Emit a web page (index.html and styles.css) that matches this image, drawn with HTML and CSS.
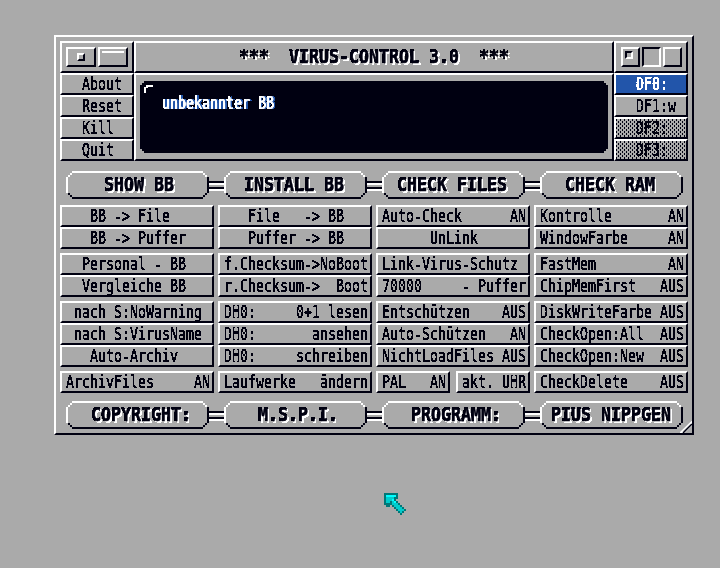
FILE: index.html
```html
<!DOCTYPE html>
<html lang="de">
<head>
<meta charset="utf-8">
<title>VIRUS-CONTROL 3.0</title>
<link rel="stylesheet" href="styles.css">
</head>
<body>
<svg class="defs" width="0" height="0">
  <filter id="crisp" x="-5%" y="-20%" width="110%" height="140%" color-interpolation-filters="sRGB"><feComponentTransfer><feFuncA type="discrete" tableValues="0 0 1 1 1"/></feComponentTransfer></filter>
  <symbol id="pill" viewBox="0 0 143 28" shape-rendering="crispEdges">
    <path fill="#fff" d="M6 0h131v2H6zM4 2h2v2H4zM2 4h2v2H2zM0 6h2v16H0zM137 2h2v2h-2zM139 4h2v2h-2z"/>
    <path fill="#000011" d="M6 26h131v2H6zM2 22h2v2H2zM4 24h2v2H4zM141 6h2v16h-2zM139 22h2v2h-2zM137 24h2v2h-2z"/>
  </symbol>
</svg>
<main class="window">
  <section class="top">
    <div class="cell gadgets">
      <i class="box wide"><b class="dot"></b></i><i class="box wide"><b class="bar"></b></i>
    </div>
    <div class="cell title"><span class="big">***  VIRUS-CONTROL 3.0  ***</span></div>
    <div class="cell gadgets right">
      <i class="box"><b class="dot in"></b></i><i class="box pressed"></i><i class="box"></i>
    </div>
    <div class="stack left">
      <div class="btn"><span>About</span></div>
      <div class="btn"><span>Reset</span></div>
      <div class="btn"><span>Kill</span></div>
      <div class="btn"><span>Quit</span></div>
    </div>
    <div class="cell screen">
      <div class="display">
        <svg class="mark" width="9" height="8" shape-rendering="crispEdges"><path fill="#fff" d="M2 0h7v2H4v1H2v5H0V2h2z"/></svg>
        <span class="msg">unbekannter BB</span>
      </div>
    </div>
    <div class="stack drives">
      <div class="btn on"><span>DF0:</span></div>
      <div class="btn"><span>DF1:w</span></div>
      <div class="btn off"><span>DF2:</span></div>
      <div class="btn off"><span>DF3:</span></div>
    </div>
  </section>

  <section class="pills">
    <div class="pill"><svg><use href="#pill"/></svg><span class="big p38">SHOW BB</span></div><i class="link"></i>
    <div class="pill"><svg><use href="#pill"/></svg><span class="big p20">INSTALL BB</span></div><i class="link"></i>
    <div class="pill"><svg><use href="#pill"/></svg><span class="big p15">CHECK FILES</span></div><i class="link"></i>
    <div class="pill"><svg><use href="#pill"/></svg><span class="big p25">CHECK RAM</span></div>
  </section>

  <section class="grid">
    <div class="col">
      <div class="btn"><span>   BB -&gt; File</span></div>
      <div class="btn end"><span>   BB -&gt; Puffer</span></div>
      <div class="btn"><span>  Personal - BB</span></div>
      <div class="btn end"><span>  Vergleiche BB</span></div>
      <div class="btn"><span> nach S:NoWarning</span></div>
      <div class="btn"><span> nach S:VirusName</span></div>
      <div class="btn end"><span>   Auto-Archiv</span></div>
      <div class="btn"><span>ArchivFiles     AN</span></div>
    </div>
    <div class="col">
      <div class="btn"><span>   File   -&gt; BB</span></div>
      <div class="btn end"><span>   Puffer -&gt; BB</span></div>
      <div class="btn"><span>f.Checksum-&gt;NoBoot</span></div>
      <div class="btn end"><span>r.Checksum-&gt;  Boot</span></div>
      <div class="btn"><span>DH0:     0+1 lesen</span></div>
      <div class="btn"><span>DH0:       ansehen</span></div>
      <div class="btn end"><span>DH0:     schreiben</span></div>
      <div class="btn"><span>Laufwerke   ändern</span></div>
    </div>
    <div class="col">
      <div class="btn"><span>Auto-Check      AN</span></div>
      <div class="btn end"><span>      UnLink</span></div>
      <div class="btn"><span>Link-Virus-Schutz</span></div>
      <div class="btn end"><span>70000     - Puffer</span></div>
      <div class="btn"><span>Entschützen    AUS</span></div>
      <div class="btn"><span>Auto-Schützen   AN</span></div>
      <div class="btn end"><span>NichtLoadFiles AUS</span></div>
      <div class="pair">
        <div class="btn"><span>PAL   AN</span></div>
        <div class="btn"><span>akt. UHR</span></div>
      </div>
    </div>
    <div class="col">
      <div class="btn"><span>Kontrolle       AN</span></div>
      <div class="btn end"><span>WindowFarbe     AN</span></div>
      <div class="btn"><span>FastMem         AN</span></div>
      <div class="btn end"><span>ChipMemFirst   AUS</span></div>
      <div class="btn"><span>DiskWriteFarbe AUS</span></div>
      <div class="btn"><span>CheckOpen:All  AUS</span></div>
      <div class="btn end"><span>CheckOpen:New  AUS</span></div>
      <div class="btn"><span>CheckDelete    AUS</span></div>
    </div>
  </section>

  <section class="pills foot">
    <div class="pill"><svg><use href="#pill"/></svg><span class="big p25">COPYRIGHT:</span></div><i class="link"></i>
    <div class="pill"><svg><use href="#pill"/></svg><span class="big p34">M.S.P.I.</span></div><i class="link"></i>
    <div class="pill"><svg><use href="#pill"/></svg><span class="big p29">PROGRAMM:</span></div><i class="link"></i>
    <div class="pill"><svg><use href="#pill"/></svg><span class="big p11">PIUS NIPPGEN</span></div>
  </section>
  <svg class="resize" width="12" height="12"><path fill="#aaa" stroke="#fff" stroke-width="1.5" d="M0.5 11.5L11.5 1V4L4 11.5z"/><path stroke="#000011" stroke-width="1.5" d="M3 12L12 3"/></svg>
</main>
<svg class="pointer" width="22" height="22" shape-rendering="crispEdges">
  <path fill="#007777" d="M0 0h14v6h-2v2h2v2h2v2h2v2h2v2h2v2h-2v2h-2v2h-2v-2h-2v-2h-2v-2h-2v-2H8v-2H6v2H2v-2H0z"/>
  <path fill="#00cccc" d="M2 4h8v4h2v2h2v2h2v2h2v2h2v2h-2v2h-2v-2h-2v-2h-2v-2h-2v-2H8V8H6v2H2z"/>
  <path fill="#00ffff" d="M2 2h10v2H2zM8 6h2v2h2v2h-2V8H8z"/>
</svg>
</body>
</html>
```
FILE: styles.css
```css
* { box-sizing: border-box; }
body {
  margin: 0;
  width: 720px;
  height: 568px;
  overflow: hidden;
  background: #aaaaaa;
  color: #000011;
  font-family: "DejaVu Sans Mono", "Liberation Mono", monospace;
}
.defs { position: absolute; }
i, b { display: block; }
.window {
  position: relative;
  width: 640px;
  height: 400px;
  margin: 35px 0 0 54px;
  padding: 4px;
  border: 2px solid;
  border-color: #fff #000011 #000011 #fff;
}
.top {
  display: grid;
  grid-template-columns: 74px 480px 74px;
  grid-template-rows: 32px 88px;
}
.cell, .btn {
  border: 2px solid;
  border-color: #fff #000011 #000011 #fff;
}
.gadgets { display: flex; gap: 2px; padding: 4px; }
.gadgets.right { padding-left: 5px; }
.box {
  width: 19px;
  height: 20px;
  border: 2px solid;
  border-color: #fff #000011 #000011 #fff;
}
.box.wide { width: 30px; }
.box.pressed { border-color: #000011 #fff #fff #000011; }
.dot {
  width: 8px;
  height: 8px;
  margin: 4px 0 0 9px;
  border: 2px solid;
  border-color: #fff #000011 #000011 #fff;
}
.dot.in { margin: 2px; border-color: #000011 #fff #fff #000011; }
.bar { height: 2px; margin: 2px; background: #fff; }
.btn { height: 22px; padding-left: 4px; }
.btn span, .big, .msg {
  display: block;
  width: max-content;
  white-space: pre;
  font-size: 13.29px;
  line-height: 18px;
  transform-origin: 0 14px;
  transform: scaleY(1.38);
  font-variant-ligatures: none;
  -webkit-text-stroke: 0.22px;
  filter: url(#crisp);
}
.btn span { margin-top: 2px; }
.left .btn, .drives .btn { padding-left: 20px; }
.btn.on { background: #2255aa; color: #fff; }
.btn.off {
  background-image:
    conic-gradient(from 0deg at 1px 2px, transparent 75%, #000011 0),
    conic-gradient(from 0deg at 1px 2px, transparent 75%, #000011 0);
  background-size: 4px 4px;
  background-position: 0 0, 2px 2px;
}
.title { padding: 6px 0 0 103px; }
.big {
  font-size: 16.61px;
  font-weight: bold;
  transform: scaleY(1.14);
  text-shadow: 2px 2px 0 #fff;
  -webkit-text-stroke: 0.5px;
}
.screen { padding: 6px 4px; }
.display {
  height: 72px;
  padding: 4px 4px;
  background: #000011;
  clip-path: polygon(4px 0, 464px 0, 464px 2px, 466px 2px, 466px 4px, 468px 4px, 468px 68px, 466px 68px, 466px 70px, 464px 70px, 464px 72px, 4px 72px, 4px 70px, 2px 70px, 2px 68px, 0 68px, 0 4px, 2px 4px, 2px 2px, 4px 2px);
}
.mark { display: block; }
.msg {
  margin: 3px 0 0 18px;
  color: #fff;
  text-shadow: 2px 0 0 #2255aa;
  -webkit-text-stroke: 0.45px;
}
.pills { display: flex; height: 28px; margin: 10px 0 0 6px; }
.pill { position: relative; width: 143px; height: 28px; padding-top: 6px; }
.pill svg { position: absolute; left: 0; top: 0; width: 143px; height: 28px; }
.link {
  width: 15px;
  height: 10px;
  margin-top: 10px;
  background: linear-gradient(#000011 2px, #fff 2px 4px, #aaaaaa 4px 6px, #000011 6px 8px, #fff 8px);
}
.p38 { margin-left: 38px; }
.p34 { margin-left: 34px; }
.p29 { margin-left: 29px; }
.p25 { margin-left: 25px; }
.p20 { margin-left: 20px; }
.p15 { margin-left: 15px; }
.p11 { margin-left: 11px; }
.grid {
  display: grid;
  grid-template-columns: repeat(4, 154px);
  gap: 4px;
  margin-top: 6px;
}
.end { margin-bottom: 4px; }
.pair { display: grid; grid-template-columns: 74px 74px; gap: 6px; }
.foot { margin-top: 8px; }
.resize { position: absolute; right: 0; bottom: 0; }
.pointer { position: absolute; left: 384px; top: 493px; }
```
